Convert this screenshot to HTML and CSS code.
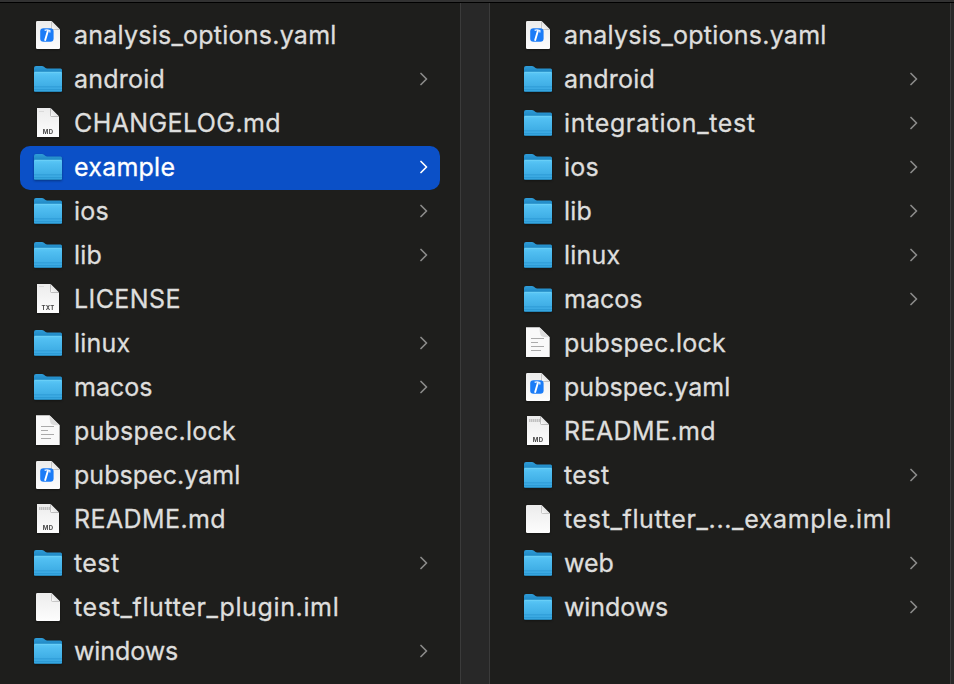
FILE: index.html
```
<!DOCTYPE html>
<html lang="en">
<head>
<meta charset="utf-8">
<title>Files</title>
<link rel="stylesheet" href="styles.css">
</head>
<body>
<svg class="defs" width="0" height="0">
  <defs>
    <linearGradient id="front" x1="0" y1="0" x2="0" y2="1"><stop offset="0" stop-color="#5cc8f7"/><stop offset=".2" stop-color="#50bef1"/><stop offset="1" stop-color="#36a5df"/></linearGradient>
    <linearGradient id="back" x1="0" y1="0" x2="0" y2="1"><stop offset="0" stop-color="#2f9cd8"/><stop offset="1" stop-color="#1a82bd"/></linearGradient>
    <linearGradient id="paper" x1="0" y1="0" x2="0" y2="1"><stop offset="0" stop-color="#ececec"/><stop offset="1" stop-color="#fdfdfd"/></linearGradient>
    <linearGradient id="curl" x1="0" y1="1" x2="1" y2="0"><stop offset="0" stop-color="#ffffff"/><stop offset=".5" stop-color="#e2e2e2"/><stop offset=".55" stop-color="#a8a8a8"/></linearGradient>
  </defs>
  <symbol id="folder" viewBox="0 0 32 32">
    <path d="M2 4q0-2 2-2h6q1 0 2 .8l1.200 1q.8.700 2 .700H28.500q1.500 0 1.500 1.500V10H2z" fill="url(#back)"/>
    <path d="M2 9q0-1 1-1H29q1 0 1 1V26.500q0 1.300-1.300 1.300H3.300Q2 27.800 2 26.500z" fill="url(#front)"/>
    <path d="M2.500 8.200H29.500" stroke="#77d6fb" stroke-width=".7"/>
    <path d="M2 22.800H30M2 25.600H30" stroke="#2591cb" stroke-width=".6"/>
    <path d="M2.500 27.600H29.500" stroke="#2388bc" stroke-width=".8"/>
  </symbol>
  <symbol id="page" viewBox="0 0 32 32">
    <path d="M5.200 1H19.500L28 9.500V27.800Q28 29 26.800 29H5.200Q4 29 4 27.800V2.200Q4 1 5.200 1z" fill="url(#paper)"/>
    <path d="M19.500 1L28 9.500H20.500q-1 0-1-1z" fill="url(#curl)"/>
    <path d="M19.500 1.500V8.500q0 1 1 1H27.500" fill="none" stroke="#a9a9a9" stroke-width=".6"/>
  </symbol>
  <symbol id="yaml" viewBox="0 0 32 32">
    <use href="#page"/>
    <rect x="8.200" y="8.200" width="13.400" height="13.600" rx="3.300" fill="#1b7cf7"/>
    <path d="M15.900 10.800L13.200 20" stroke="#fff" stroke-width="1.900" stroke-linecap="round"/>
    <path d="M12.600 10.400Q14.500 9.200 17.800 10.500L17.900 12.500" fill="none" stroke="#e7f1ff" stroke-width="1.300"/>
  </symbol>
  <symbol id="doc" viewBox="0 0 32 32">
    <path d="M5 0H18.500L27 8.500V29H5z" fill="url(#paper)"/>
    <path d="M18.500 0L27 8.500H19.500q-1 0-1-1z" fill="url(#curl)"/>
    <path d="M18.500 0V7.500q0 1 1 1H27" fill="none" stroke="#989898" stroke-width=".6"/>
  </symbol>
  <symbol id="lock" viewBox="0 0 32 32">
    <path d="M4 -.7H17.500L27.700 9.300V29H4z" fill="#f9f9f9"/>
    <path d="M17.500 -.7Q17.700 7 19.500 8.300T27.700 9.300z" fill="#dcdcdc"/>
    <path d="M9 10.500H22M9 14.500H16M9 18.500H22M9 22.500H19" stroke="#aaa" stroke-width="1.100"/>
  </symbol>
  <symbol id="chevron" viewBox="0 0 8 14">
    <path d="M1 1.500L6.500 7L1 12.500" fill="none" stroke="currentColor" stroke-width="1.700" stroke-linecap="round" stroke-linejoin="round"/>
  </symbol>
</svg>
<main class="browser">
  <ul class="column">
    <li class="row"><svg class="icon"><use href="#yaml"/></svg><span class="name">analysis_options.yaml</span></li>
    <li class="row"><svg class="icon"><use href="#folder"/></svg><span class="name">android</span><svg class="chevron"><use href="#chevron"/></svg></li>
    <li class="row"><svg class="icon"><use href="#doc"/><path d="M7 3.500h5" class="faint"/><text x="16.100" y="26" class="kind">MD</text></svg><span class="name wide">CHANGELOG.md</span></li>
    <li class="row selected"><svg class="icon"><use href="#folder"/></svg><span class="name">example</span><svg class="chevron"><use href="#chevron"/></svg></li>
    <li class="row"><svg class="icon"><use href="#folder"/></svg><span class="name">ios</span><svg class="chevron"><use href="#chevron"/></svg></li>
    <li class="row"><svg class="icon"><use href="#folder"/></svg><span class="name">lib</span><svg class="chevron"><use href="#chevron"/></svg></li>
    <li class="row"><svg class="icon"><use href="#doc"/><path d="M7 2.500h5" class="faint"/><text x="16.100" y="26" class="kind">TXT</text></svg><span class="name wide">LICENSE</span></li>
    <li class="row"><svg class="icon"><use href="#folder"/></svg><span class="name">linux</span><svg class="chevron"><use href="#chevron"/></svg></li>
    <li class="row"><svg class="icon"><use href="#folder"/></svg><span class="name snug">macos</span><svg class="chevron"><use href="#chevron"/></svg></li>
    <li class="row"><svg class="icon"><use href="#lock"/></svg><span class="name">pubspec.lock</span></li>
    <li class="row"><svg class="icon"><use href="#yaml"/></svg><span class="name snug">pubspec.yaml</span></li>
    <li class="row"><svg class="icon"><use href="#doc"/><path d="M7 4.500h11" class="heading"/><text x="16.100" y="26" class="kind">MD</text></svg><span class="name wide">README.md</span></li>
    <li class="row"><svg class="icon"><use href="#folder"/></svg><span class="name wide">test</span><svg class="chevron"><use href="#chevron"/></svg></li>
    <li class="row"><svg class="icon"><use href="#page"/></svg><span class="name wider">test_flutter_plugin.iml</span></li>
    <li class="row"><svg class="icon"><use href="#folder"/></svg><span class="name tight">windows</span><svg class="chevron"><use href="#chevron"/></svg></li>
  </ul>
  <div class="gutter"></div>
  <ul class="column">
    <li class="row"><svg class="icon"><use href="#yaml"/></svg><span class="name">analysis_options.yaml</span></li>
    <li class="row"><svg class="icon"><use href="#folder"/></svg><span class="name">android</span><svg class="chevron"><use href="#chevron"/></svg></li>
    <li class="row"><svg class="icon"><use href="#folder"/></svg><span class="name wider">integration_test</span><svg class="chevron"><use href="#chevron"/></svg></li>
    <li class="row"><svg class="icon"><use href="#folder"/></svg><span class="name">ios</span><svg class="chevron"><use href="#chevron"/></svg></li>
    <li class="row"><svg class="icon"><use href="#folder"/></svg><span class="name">lib</span><svg class="chevron"><use href="#chevron"/></svg></li>
    <li class="row"><svg class="icon"><use href="#folder"/></svg><span class="name">linux</span><svg class="chevron"><use href="#chevron"/></svg></li>
    <li class="row"><svg class="icon"><use href="#folder"/></svg><span class="name snug">macos</span><svg class="chevron"><use href="#chevron"/></svg></li>
    <li class="row"><svg class="icon"><use href="#lock"/></svg><span class="name">pubspec.lock</span></li>
    <li class="row"><svg class="icon"><use href="#yaml"/></svg><span class="name snug">pubspec.yaml</span></li>
    <li class="row"><svg class="icon"><use href="#doc"/><path d="M7 4.500h11" class="heading"/><text x="16.100" y="26" class="kind">MD</text></svg><span class="name wide">README.md</span></li>
    <li class="row"><svg class="icon"><use href="#folder"/></svg><span class="name wide">test</span><svg class="chevron"><use href="#chevron"/></svg></li>
    <li class="row"><svg class="icon"><use href="#page"/></svg><span class="name wider">test_flutter_..._example.iml</span></li>
    <li class="row"><svg class="icon"><use href="#folder"/></svg><span class="name tight">web</span><svg class="chevron"><use href="#chevron"/></svg></li>
    <li class="row"><svg class="icon"><use href="#folder"/></svg><span class="name tight">windows</span><svg class="chevron"><use href="#chevron"/></svg></li>
  </ul>
  <div class="gutter"></div>
</main>
</body>
</html>
```
FILE: styles.css
```
* { box-sizing: border-box; }
body {
  margin: 0;
  height: 684px;
  overflow: hidden;
  background: #1e1e1c;
  border-top: 2px solid #323232;
  font-family: Inter, "Liberation Sans", sans-serif;
  color: #dededd;
}
.defs { display: block; }
symbol { overflow: visible; }
.browser {
  display: flex;
  height: 682px;
  border-top: 1px solid #000;
}
.column {
  flex: none;
  width: 460px;
  margin: 0;
  padding: 11px 20px 0;
  list-style: none;
}
.gutter {
  flex: none;
  width: 30px;
  background: #282828;
  border-left: 1px solid #3b3b3b;
  border-right: 1px solid #3b3b3b;
}
.row {
  display: flex;
  align-items: flex-start;
  height: 44px;
  padding: 6px 12px 0;
  border-radius: 10px;
}
.selected { background: #0b50c7; color: #fff; }
.icon {
  flex: none;
  width: 32px;
  height: 32px;
  overflow: visible;
  filter: drop-shadow(0 1px 1px rgba(0, 0, 0, .35));
}
.name {
  flex: 1;
  margin-left: 10px;
  font-size: 25px;
  line-height: 30px;
  letter-spacing: .24px;
  white-space: nowrap;
  -webkit-text-stroke: .3px currentColor;
}
.tight { letter-spacing: -.1px; }
.snug { letter-spacing: .04px; }
.wide { letter-spacing: .4px; }
.wider { letter-spacing: .64px; }
.chevron {
  flex: none;
  width: 8px;
  height: 14px;
  margin-top: 8px;
  color: #8a8a89;
}
.selected .chevron { color: #fff; }
.kind {
  font: 700 6px Inter, sans-serif;
  fill: #444;
  text-anchor: middle;
  letter-spacing: .3px;
}
.faint { stroke: #dadada; stroke-width: 1; }
.heading { stroke: #c0c0c0; stroke-width: 3; stroke-dasharray: 1.500 .5; }
```
